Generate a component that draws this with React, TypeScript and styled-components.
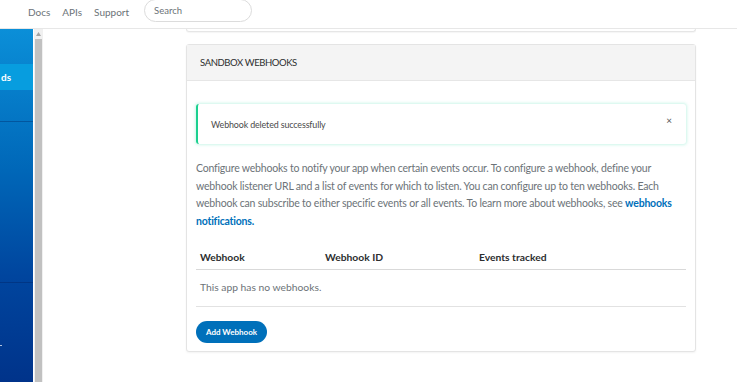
import React from "react";
import styled, { createGlobalStyle } from "styled-components";

const Global = createGlobalStyle`
  html, body { margin: 0; padding: 0; background: #fff; }
  body { font-family: Lato, "Open Sans", "Liberation Sans", sans-serif; width: 737px; height: 382px; overflow: hidden; }
  * { box-sizing: border-box; }
`;

const Page = styled.div`
  display: flex;
  flex-direction: column;
  width: 737px;
  height: 382px;
`;

const TopBar = styled.header`
  height: 29px;
  border-bottom: 1px solid #e7e7e7;
  display: flex;
  align-items: flex-start;
  padding-left: 28px;
  flex-shrink: 0;
`;

const NavLink = styled.a`
  font-size: 10px;
  color: #6c7378;
  margin-top: 5px;
  margin-right: 12px;
  text-decoration: none;
  line-height: 14px;
`;

const Search = styled.div`
  margin-left: 3px;
  margin-top: -1px;
  width: 108px;
  height: 23px;
  border: 1px solid #dcdcdc;
  border-radius: 12px;
  font-size: 9.5px;
  color: #6c7378;
  padding: 5px 0 0 9px;
`;

const Body = styled.div`
  flex: 1;
  display: flex;
  min-height: 0;
`;

const Sidebar = styled.nav`
  width: 33px;
  flex-shrink: 0;
  background: linear-gradient(180deg, #0b8fd8 0%, #0067b8 40%, #00459e 70%, #00338a 100%);
  display: flex;
  flex-direction: column;
  overflow: hidden;
`;

const SideGap = styled.div<{ h: number }>`
  height: ${(p) => p.h}px;
  flex-shrink: 0;
`;

const SideActive = styled.div`
  height: 26px;
  background: #079ddf;
  color: #fff;
  font-weight: 700;
  font-size: 10px;
  line-height: 26px;
  padding-left: 1px;
  white-space: nowrap;
  flex-shrink: 0;
`;

const SideRule = styled.div`
  height: 1px;
  background: rgba(0, 30, 90, 0.35);
  flex-shrink: 0;
`;

const SideDot = styled.div`
  width: 2px;
  height: 1px;
  background: rgba(255, 255, 255, 0.7);
  flex-shrink: 0;
`;

const ScrollTrack = styled.div`
  width: 10px;
  flex-shrink: 0;
  background: #f0f0f0;
  display: flex;
  flex-direction: column;
  border-left: 1px solid #fff;
`;

const ScrollArrow = styled.div`
  height: 10px;
  display: flex;
  align-items: center;
  justify-content: center;
`;

const ScrollThumb = styled.div`
  flex: 1;
  margin: 0 1px;
  background: #c1c1c1;
`;

const Main = styled.main`
  flex: 1;
  min-width: 0;
  padding-left: 143px;
  padding-right: 41px;
  display: flex;
  flex-direction: column;
`;

const PrevCard = styled.div`
  height: 3px;
  border: 1px solid #e6e6e6;
  border-top: none;
  border-radius: 0 0 3px 3px;
  box-shadow: 0 1px 1px rgba(0, 0, 0, 0.04);
`;

const Card = styled.section`
  margin-top: 12px;
  border: 1px solid #e4e4e4;
  border-radius: 3px;
  box-shadow: 0 1px 2px rgba(0, 0, 0, 0.05);
  background: #fff;
`;

const CardHead = styled.div`
  height: 36px;
  background: #f4f4f4;
  border-bottom: 1px solid #e6e6e6;
  padding-left: 13px;
  font-size: 9.5px;
  letter-spacing: -0.4px;
  line-height: 35px;
  color: #2c2e2f;
`;

const CardBody = styled.div`
  padding: 23px 9px 8px 9px;
`;

const Alert = styled.div`
  height: 40px;
  border-left: 2px solid #1bd08f;
  border-radius: 3px;
  box-shadow: 0 0 3px 1px rgba(170, 240, 220, 0.6);
  display: flex;
  align-items: center;
  justify-content: space-between;
  padding: 1px 14px 0 13px;
  font-size: 8.9px;
  letter-spacing: -0.12px;
  color: #4a4a4a;
`;

const Close = styled.span`
  font-size: 10px;
  color: #555;
  margin-top: -10px;
`;

const Para = styled.p`
  margin: 16px 0 0 0;
  font-size: 10.5px;
  letter-spacing: -0.2px;
  line-height: 17.6px;
  color: #6c7378;
  white-space: nowrap;
`;

const Link = styled.a`
  color: #0070ba;
  font-weight: 700;
  text-decoration: none;
`;

const Table = styled.div`
  margin-top: 13px;
`;

const HeadRow = styled.div`
  display: grid;
  grid-template-columns: 125px 154px 1fr;
  padding: 8px 0 0 4px;
  height: 27px;
  border-bottom: 1px solid #d9d9d9;
  font-size: 10.3px;
  font-weight: 700;
  color: #2c2e2f;
`;

const EmptyRow = styled.div`
  padding: 11px 0 0 4px;
  height: 37px;
  border-bottom: 1px solid #e2e2e2;
  font-size: 10.3px;
  color: #6c7378;
`;

const Button = styled.button`
  margin-top: 14px;
  width: 71px;
  height: 22px;
  border: none;
  border-radius: 11px;
  background: #0070ba;
  color: #fff;
  font-family: Lato, "Open Sans", sans-serif;
  font-weight: 700;
  font-size: 8px;
  padding: 0;
`;

export default function App() {
  return (
    <>
      <Global />
      <Page>
        <TopBar>
          <NavLink>Docs</NavLink>
          <NavLink>APIs</NavLink>
          <NavLink>Support</NavLink>
          <Search>Search</Search>
        </TopBar>
        <Body>
          <Sidebar>
            <SideGap h={35} />
            <SideActive>ds</SideActive>
            <SideGap h={31} />
            <SideRule />
            <SideGap h={160} />
            <SideRule />
            <SideGap h={62} />
            <SideDot />
          </Sidebar>
          <ScrollTrack>
            <ScrollArrow>
              <svg width="5" height="4" viewBox="0 0 5 4">
                <path d="M0 4 L2.5 0 L5 4 Z" fill="#a3a3a3" />
              </svg>
            </ScrollArrow>
            <ScrollThumb />
          </ScrollTrack>
          <Main>
            <PrevCard />
            <Card>
              <CardHead>SANDBOX WEBHOOKS</CardHead>
              <CardBody>
                <Alert>
                  <span>Webhook deleted successfully</span>
                  <Close>×</Close>
                </Alert>
                <Para>
                  Configure webhooks to notify your app when certain events occur. To configure a webhook, define your
                  <br />
                  webhook listener URL and a list of events for which to listen. You can configure up to ten webhooks. Each
                  <br />
                  webhook can subscribe to either specific events or all events. To learn more about webhooks, see{" "}
                  <Link>webhooks</Link>
                  <br />
                  <Link>notifications.</Link>
                </Para>
                <Table>
                  <HeadRow>
                    <span>Webhook</span>
                    <span>Webhook ID</span>
                    <span>Events tracked</span>
                  </HeadRow>
                  <EmptyRow>This app has no webhooks.</EmptyRow>
                </Table>
                <Button>Add Webhook</Button>
              </CardBody>
            </Card>
          </Main>
        </Body>
      </Page>
    </>
  );
}
